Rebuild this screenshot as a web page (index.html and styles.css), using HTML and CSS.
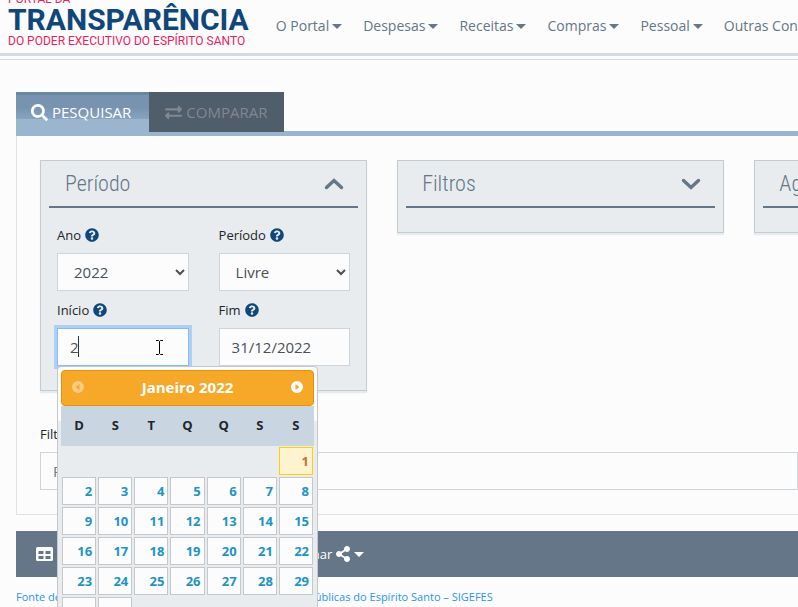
FILE: index.html
```html
<!DOCTYPE html>
<html lang="pt-BR">
<head>
<meta charset="utf-8">
<title>Portal da Transparência</title>
<link rel="stylesheet" href="styles.css">
</head>
<body>
<svg class="sprite" aria-hidden="true">
  <symbol id="i-search" viewBox="0 0 512 512"><path d="M505 442.700L405.300 343c-4.500-4.500-10.600-7-17-7H372c27.600-35.300 44-79.700 44-128C416 93.100 322.900 0 208 0S0 93.100 0 208s93.100 208 208 208c48.300 0 92.700-16.400 128-44v16.300c0 6.400 2.500 12.500 7 17l99.700 99.700c9.400 9.400 24.600 9.400 33.900 0l28.300-28.300c9.400-9.400 9.400-24.600.1-34zM208 336c-70.700 0-128-57.200-128-128 0-70.700 57.200-128 128-128 70.700 0 128 57.200 128 128 0 70.700-57.200 128-128 128z"/></symbol>
  <symbol id="i-exchange" viewBox="0 0 512 512"><path d="M0 168v-16c0-13.255 10.745-24 24-24h360V80c0-21.367 25.899-32.042 40.971-16.971l80 80c9.372 9.373 9.372 24.569 0 33.941l-80 80C409.956 271.982 384 261.456 384 240v-48H24c-13.255 0-24-10.745-24-24zm488 152H128v-48c0-21.314-25.862-32.080-40.971-16.971l-80 80c-9.372 9.373-9.372 24.569 0 33.941l80 80C102.057 463.997 128 453.437 128 432v-48h360c13.255 0 24-10.745 24-24v-16c0-13.255-10.745-24-24-24z"/></symbol>
  <symbol id="i-help" viewBox="0 0 512 512"><path d="M504 256c0 136.997-111.043 248-248 248S8 392.997 8 256C8 119.083 119.043 8 256 8s248 111.083 248 248zM262.655 90c-54.497 0-89.255 22.957-116.549 63.758-3.536 5.286-2.353 12.415 2.715 16.258l34.699 26.310c5.205 3.947 12.621 3.008 16.665-2.122 17.864-22.658 30.113-35.797 57.303-35.797 20.429 0 45.698 13.148 45.698 32.958 0 14.976-12.363 22.667-32.534 33.976C247.128 238.528 216 254.941 216 296v4c0 6.627 5.373 12 12 12h56c6.627 0 12-5.373 12-12v-1.333c0-28.462 83.186-29.647 83.186-106.667 0-58.002-60.165-102-116.531-102zM256 338c-25.365 0-46 20.635-46 46 0 25.364 20.635 46 46 46s46-20.636 46-46c0-25.365-20.635-46-46-46z"/></symbol>
  <symbol id="i-share" viewBox="0 0 448 512"><path d="M352 320c-22.608 0-43.387 7.819-59.790 20.895l-102.486-64.054a96.551 96.551 0 0 0 0-41.683l102.486-64.054C308.613 184.181 329.392 192 352 192c53.019 0 96-42.981 96-96S405.019 0 352 0s-96 42.981-96 96c0 7.158.79 14.130 2.276 20.841L155.790 180.895C139.387 167.819 118.608 160 96 160c-53.019 0-96 42.981-96 96s42.981 96 96 96c22.608 0 43.387-7.819 59.790-20.895l102.486 64.054A96.301 96.301 0 0 0 256 416c0 53.019 42.981 96 96 96s96-42.981 96-96-42.981-96-96-96z"/></symbol>
  <symbol id="i-table" viewBox="0 0 17 14"><path fill-rule="evenodd" d="M1.500 0h14A1.500 1.500 0 0 1 17 1.500v11a1.500 1.500 0 0 1-1.500 1.500h-14A1.500 1.500 0 0 1 0 12.500v-11A1.500 1.500 0 0 1 1.500 0zM2.500 4v3h5V4zM9.500 4v3h5V4zM2.500 9v3h5V9zM9.500 9v3h5V9z"/></symbol>
  <symbol id="i-down" viewBox="0 0 20 12"><path d="M2.500 2.500L10 9.500L17.500 2.500" fill="none" stroke="currentColor" stroke-width="3.400" stroke-linecap="round"/></symbol>
  <symbol id="i-up" viewBox="0 0 20 12"><path d="M2.500 9.500L10 2.500L17.500 9.500" fill="none" stroke="currentColor" stroke-width="3.400" stroke-linecap="round"/></symbol>
  <symbol id="i-next" viewBox="0 0 12 12"><path fill-rule="evenodd" d="M6 0a6 6 0 1 1 0 12a6 6 0 1 1 0-12zM4.500 3v6L8.500 6z"/></symbol>
  <symbol id="i-prev" viewBox="0 0 12 12"><path fill-rule="evenodd" d="M6 0a6 6 0 1 1 0 12a6 6 0 1 1 0-12zM7.500 3v6L3.500 6z"/></symbol>
</svg>

<header class="site-header">
  <a class="brand" href="#">
    <span class="brand-small">PORTAL DA</span>
    <span class="brand-main">TRANSPARÊNCIA</span>
    <span class="brand-small">DO PODER EXECUTIVO DO ESPÍRITO SANTO</span>
  </a>
  <nav class="menu">
    <a class="caret" href="#">O Portal</a>
    <a class="caret" href="#">Despesas</a>
    <a class="caret" href="#">Receitas</a>
    <a class="caret" href="#">Compras</a>
    <a class="caret" href="#">Pessoal</a>
    <a class="caret" href="#">Outras Consultas</a>
  </nav>
</header>

<main class="content">
  <div class="tabs">
    <button class="tab active" type="button"><svg class="icon"><use href="#i-search"/></svg>PESQUISAR</button>
    <button class="tab" type="button"><svg class="icon"><use href="#i-exchange"/></svg>COMPARAR</button>
  </div>

  <section class="panel">
    <div class="cards">
      <section class="card">
        <div class="card-head"><h2>Período</h2><svg class="chevron"><use href="#i-up"/></svg></div>
        <form class="fields">
          <div class="field">
            <label for="ano">Ano <svg class="help"><use href="#i-help"/></svg></label>
            <select id="ano" class="control"><option>2022</option></select>
          </div>
          <div class="field">
            <label for="periodo">Período <svg class="help"><use href="#i-help"/></svg></label>
            <select id="periodo" class="control"><option>Livre</option></select>
          </div>
          <div class="field date-field">
            <label for="inicio">Início <svg class="help"><use href="#i-help"/></svg></label>
            <input id="inicio" class="control editing" type="text" value="2">
            <span class="text-caret"></span>
            <svg class="pointer" viewBox="0 0 9 17"><path d="M1 1.500h2.500l1 1l1-1H8M4.500 2.500v12M1 15.500h2.500l1-1l1 1H8" fill="none" stroke="#000"/></svg>
            <div class="calendar">
              <div class="cal-head">
                <button type="button" aria-label="Anterior" disabled><svg><use href="#i-prev"/></svg></button>
                <strong>Janeiro 2022</strong>
                <button type="button" aria-label="Próximo"><svg><use href="#i-next"/></svg></button>
              </div>
              <table>
                <thead><tr><th>D</th><th>S</th><th>T</th><th>Q</th><th>Q</th><th>S</th><th>S</th></tr></thead>
                <tbody>
                  <tr><td></td><td></td><td></td><td></td><td></td><td></td><td><a class="today" href="#">1</a></td></tr>
                  <tr><td><a href="#">2</a></td><td><a href="#">3</a></td><td><a href="#">4</a></td><td><a href="#">5</a></td><td><a href="#">6</a></td><td><a href="#">7</a></td><td><a href="#">8</a></td></tr>
                  <tr><td><a href="#">9</a></td><td><a href="#">10</a></td><td><a href="#">11</a></td><td><a href="#">12</a></td><td><a href="#">13</a></td><td><a href="#">14</a></td><td><a href="#">15</a></td></tr>
                  <tr><td><a href="#">16</a></td><td><a href="#">17</a></td><td><a href="#">18</a></td><td><a href="#">19</a></td><td><a href="#">20</a></td><td><a href="#">21</a></td><td><a href="#">22</a></td></tr>
                  <tr><td><a href="#">23</a></td><td><a href="#">24</a></td><td><a href="#">25</a></td><td><a href="#">26</a></td><td><a href="#">27</a></td><td><a href="#">28</a></td><td><a href="#">29</a></td></tr>
                  <tr><td><a href="#">30</a></td><td><a href="#">31</a></td><td></td><td></td><td></td><td></td><td></td></tr>
                </tbody>
              </table>
            </div>
          </div>
          <div class="field">
            <label for="fim">Fim <svg class="help"><use href="#i-help"/></svg></label>
            <input id="fim" class="control" type="text" value="31/12/2022">
          </div>
        </form>
      </section>
      <section class="card">
        <div class="card-head"><h2>Filtros</h2><svg class="chevron"><use href="#i-down"/></svg></div>
      </section>
      <section class="card">
        <div class="card-head"><h2>Agrupamento</h2><svg class="chevron"><use href="#i-down"/></svg></div>
      </section>
    </div>
    <div class="field quick">
      <label for="filtro">Filtro</label>
      <input id="filtro" class="control" type="text" placeholder="Pesquisar">
    </div>
  </section>

  <div class="toolbar">
    <button type="button"><svg class="grid-icon"><use href="#i-table"/></svg>Tabela</button>
    <button type="button">Exportar dados</button>
    <button class="caret" type="button">Compartilhar<svg class="share-icon"><use href="#i-share"/></svg></button>
  </div>
  <a class="source" href="#">Fonte de dados: Sistema Integrado de Gestão e Finanças Públicas do Espírito Santo – SIGEFES</a>
</main>
</body>
</html>
```
FILE: styles.css
```css
* { box-sizing: border-box; }

body {
  margin: 0;
  min-height: 100vh;
  overflow: hidden;
  background: #fcfcfc;
  color: #212529;
  font-family: "Open Sans", "Noto Sans", sans-serif;
  font-size: 13px;
}

a { text-decoration: none; }

button {
  border: 0;
  padding: 0;
  background: none;
  color: inherit;
  font: inherit;
}

svg { fill: currentColor; flex: none; }

.sprite { position: absolute; width: 0; height: 0; }

/* Header */
.site-header {
  position: relative;
  display: flex;
  align-items: flex-end;
  height: 56px;
  padding-left: 8px;
  gap: 27px;
  border-bottom: 3px solid #d5d9e0;
  white-space: nowrap;
}

.site-header::after {
  content: "";
  position: absolute;
  left: 0;
  right: 0;
  top: 59px;
  height: 1px;
  background: #d5d9e0;
}

.brand {
  display: flex;
  flex-direction: column;
  padding-bottom: 5px;
  font-family: Roboto, sans-serif;
}

.brand-small { color: #ea1d5d; font-size: 12px; line-height: 14px; }
.brand-main { color: #10477a; font-size: 30px; font-weight: 700; line-height: 28px; }

.menu {
  display: flex;
  gap: 21px;
  padding-bottom: 17px;
  font-size: 14px;
  line-height: 20px;
}

.menu a { color: #647687; }

.caret { display: flex; align-items: center; gap: 3px; }

.caret::after {
  content: "";
  border: 5px solid transparent;
  border-top-color: currentColor;
  border-bottom: 0;
}

/* Tabs */
.content { padding: 36px 0 0 16px; }

.tabs {
  display: flex;
  align-items: flex-start;
  height: 44px;
  background: linear-gradient(#9bb5ce, #9bb5ce) bottom / 100% 5px no-repeat;
}

.tab {
  display: flex;
  align-items: center;
  gap: 4px;
  height: 40px;
  padding: 0 17px 0 16px;
  background: #505d6b;
  color: #818890;
  font-size: 15px;
}

.tab.active {
  height: 44px;
  padding: 0 18px 4px 15px;
  background: linear-gradient(#6b86a1 3px, #7893b0 3px, #7893b0 15px, #88a3bf 27px, #9bb5ce 27px);
  color: #fff;
}

.icon { width: 17px; height: 17px; }

/* Search panel */
.panel {
  padding: 24px 0 24px 23px;
  border-left: 1px solid #dde3e8;
  border-bottom: 1px solid #dde3e8;
}

.cards {
  display: grid;
  grid-auto-flow: column;
  grid-auto-columns: 41vw;
  align-items: start;
  gap: 30px;
}

.card {
  padding: 0 8px 24px;
  border: 1px solid #c6cbd0;
  background: #e8ecef;
  box-shadow: 0 2px 1px #e6ebee;
}

.card-head {
  display: flex;
  align-items: center;
  justify-content: space-between;
  height: 47px;
  padding: 0 14px 0 16px;
  border-bottom: 2px solid #647687;
  color: #647687;
}

.card-head h2 {
  margin: 0;
  font-family: "Liberation Sans Narrow", "Roboto Condensed", "Open Sans", sans-serif;
  font-size: 22px;
  font-weight: 300;
}

.chevron { width: 20px; height: 12px; }

.fields {
  display: grid;
  grid-template-columns: 1fr 1fr;
  column-gap: 30px;
  row-gap: 9px;
  padding: 17px 8px 0;
}

.field { min-width: 0; }

label {
  display: flex;
  align-items: center;
  gap: 4px;
  height: 20px;
  margin-bottom: 8px;
}

.help { width: 14px; height: 14px; color: #10477a; }

.control {
  display: block;
  width: 100%;
  height: 38px;
  padding: 6px 12px;
  border: 1px solid #ced4da;
  border-radius: 0;
  outline: 0;
  background: #fcfcfc;
  color: #495057;
  font-family: inherit;
  font-size: 15px;
}

.control::placeholder { color: #6c757d; }

.control.editing {
  border-color: #80bdff;
  box-shadow: 0 0 0 3px #afd0f1;
}

.date-field { position: relative; }

.text-caret {
  position: absolute;
  left: 21px;
  top: 36px;
  width: 1px;
  height: 21px;
  background: #333;
}

.pointer {
  position: absolute;
  left: 98px;
  top: 39px;
  width: 9px;
  height: 17px;
}

.quick { margin-top: 33px; }

/* Date picker */
.calendar {
  position: absolute;
  z-index: 2;
  left: 0;
  top: 66px;
  width: 261px;
  padding: 3px;
  border: 1px solid #c5c8cb;
  border-radius: 4px;
  background: linear-gradient(#fcfcfc 54px, #e8ecef 54px);
}

.cal-head {
  display: flex;
  align-items: center;
  justify-content: space-between;
  height: 36px;
  padding: 0 10px 2px;
  border: 1px solid #e78f08;
  border-radius: 4px;
  background: #f6a828;
  color: #fff;
  font-size: 15px;
}

.cal-head button { display: flex; }
.cal-head button:disabled { opacity: .4; }
.cal-head svg { width: 12px; height: 12px; }

.calendar table {
  width: 100%;
  border-collapse: collapse;
  table-layout: fixed;
}

.calendar th {
  height: 40px;
  padding: 0 0 2px;
  background: #c9d5e1;
  font-size: 13px;
}

.calendar td { height: 30px; padding: 1px; }

.calendar td a {
  display: block;
  padding: 0 3px;
  border: 1px solid #c5c8cb;
  background: #fcfcfc;
  color: #1c94c4;
  font-weight: 700;
  line-height: 26px;
  text-align: right;
}

.calendar td a.today {
  border-color: #fed000;
  background: #fdf3cf;
  color: #c77430;
}

/* Toolbar and source */
.toolbar {
  display: flex;
  align-items: center;
  gap: 30px;
  height: 46px;
  margin-top: 16px;
  padding: 0 20px;
  background: #647687;
  color: #fff;
}

.toolbar button { display: flex; align-items: center; gap: 3px; }
.grid-icon { width: 17px; height: 14px; margin-right: 3px; }
.share-icon { width: 16px; height: 16px; }

.source {
  display: block;
  margin-top: 12px;
  color: #2a93ee;
  font-size: 11px;
  line-height: 16px;
  white-space: nowrap;
}
```
